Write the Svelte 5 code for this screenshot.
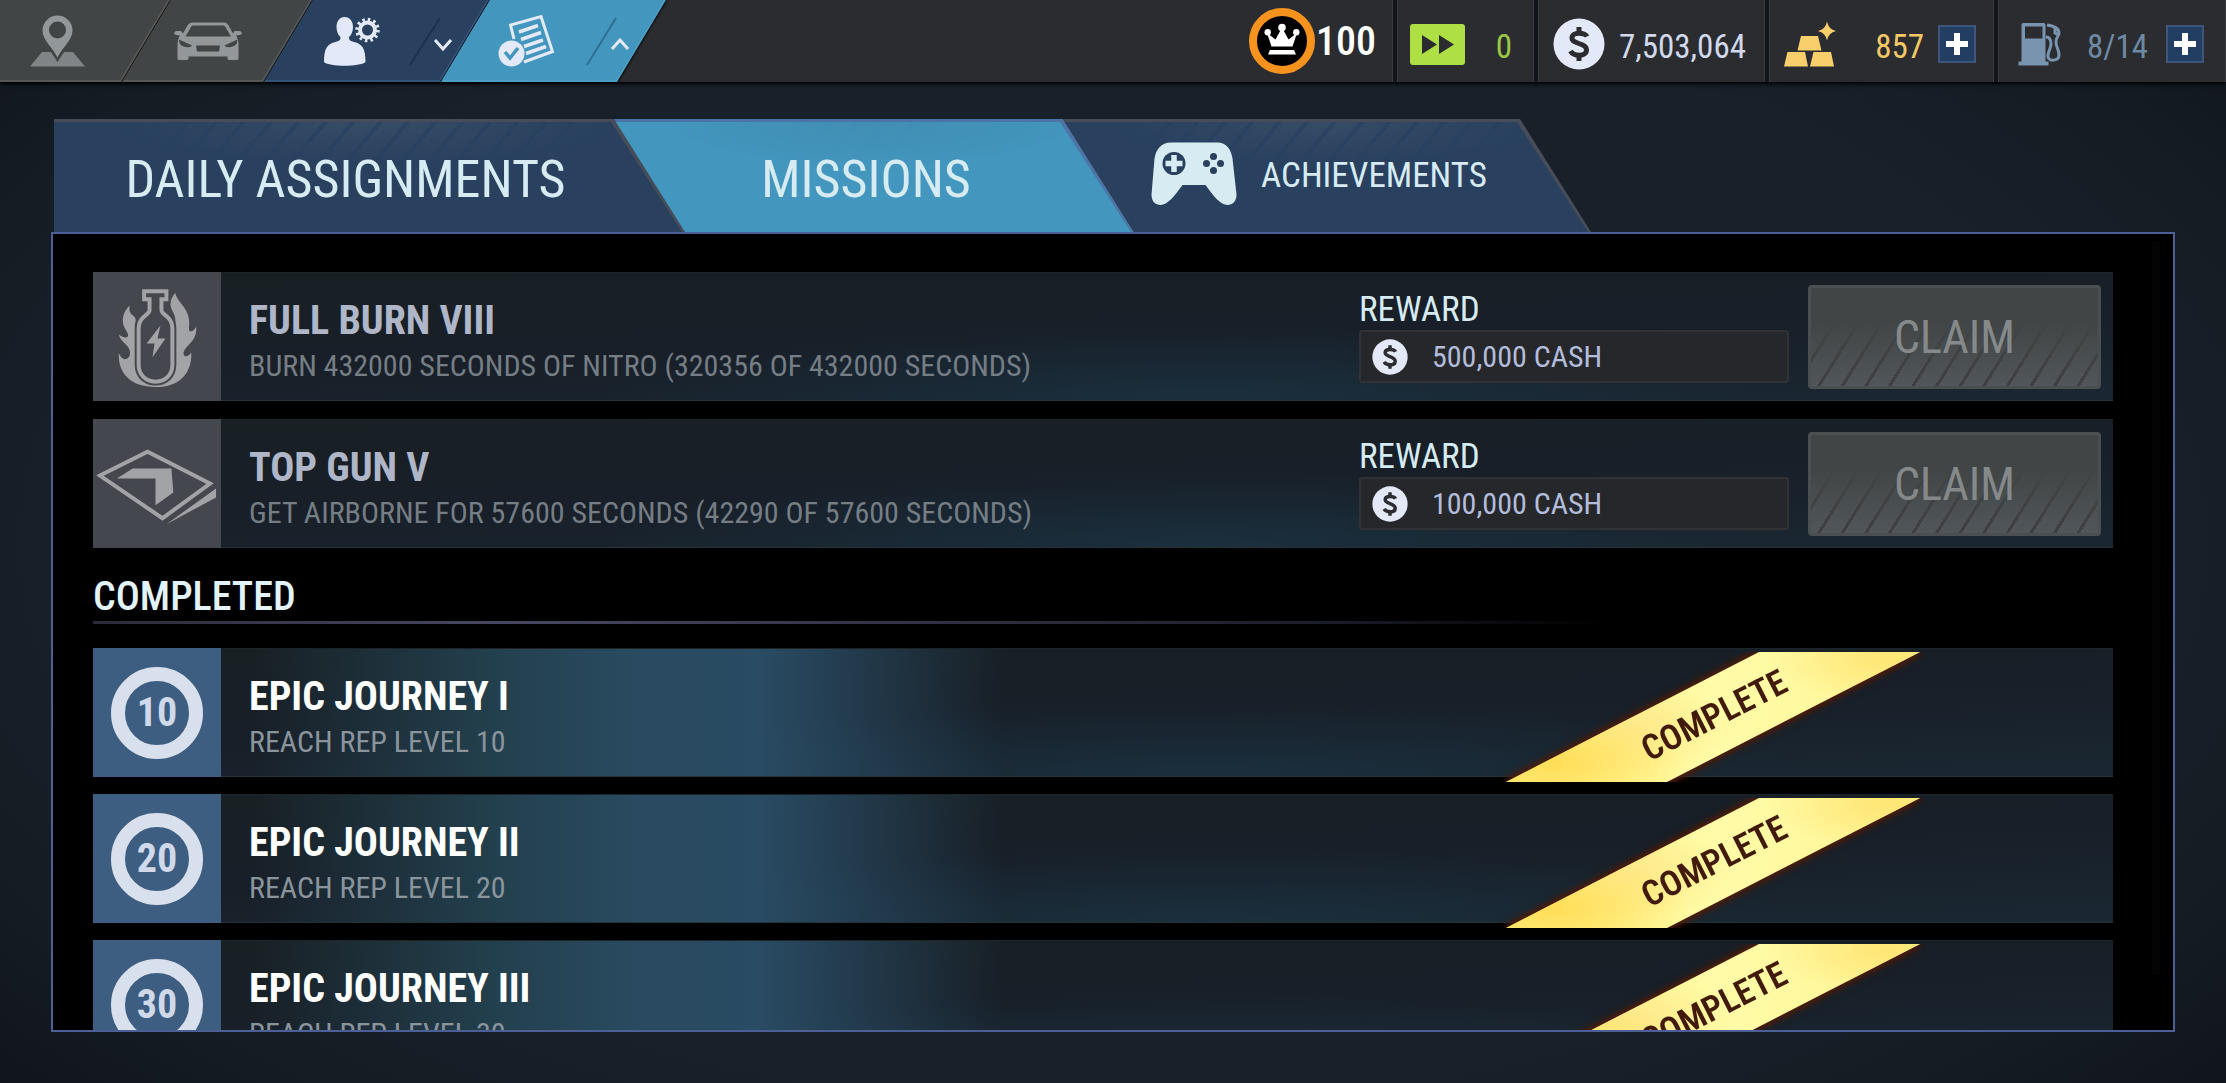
<script lang="ts">
	type Mission = { title: string; text: string; reward: string; icon: 'nitro' | 'air' };
	type Done = { level: number; title: string };

	const missions: Mission[] = [
		{
			title: 'FULL BURN VIII',
			text: 'BURN 432000 SECONDS OF NITRO (320356 OF 432000 SECONDS)',
			reward: '500,000 CASH',
			icon: 'nitro'
		},
		{
			title: 'TOP GUN V',
			text: 'GET AIRBORNE FOR 57600 SECONDS (42290 OF 57600 SECONDS)',
			reward: '100,000 CASH',
			icon: 'air'
		}
	];

	const completed: Done[] = [
		{ level: 10, title: 'EPIC JOURNEY I' },
		{ level: 20, title: 'EPIC JOURNEY II' },
		{ level: 30, title: 'EPIC JOURNEY III' }
	];

	let activeTab = $state('missions');
</script>

{#snippet coin(size: number)}
	<svg width={size} height={size} viewBox="0 0 52 52" aria-hidden="true">
		<circle cx="26" cy="26" r="25.5" fill="#e3e9f8" />
		<path d="M34 18.500C32 14.500 19 13 19 20c0 6.500 14.500 4.500 14.500 12 0 7-13 6.500-16 1" fill="none" stroke="#2b2c30" stroke-width="5" />
		<path d="M26 9v6M26 37v6" stroke="#2b2c30" stroke-width="5" />
	</svg>
{/snippet}

{#snippet plus()}
	<svg width="22" height="22" viewBox="0 0 22 22" aria-hidden="true">
		<path d="M11 0v22M0 11h22" stroke="#fff" stroke-width="6" />
	</svg>
{/snippet}

<div class="screen">
	<header class="topbar">
		<nav class="nav">
			<button class="nav-item first" aria-label="Map">
				<svg width="56" height="52" viewBox="30 15 56 52" aria-hidden="true">
					<path d="M42 52h31l12 14.500H30z" fill="#808486" />
					<path d="M57.500 62L47 46h21z" fill="#414545" />
					<path fill="#929799" fill-rule="evenodd" d="M57.500 57.500C53 48 42.500 40 42.500 30.500a15 15 0 0 1 30 0C72.500 40 62 48 57.500 57.500zM57.500 21.500a8.500 8.500 0 1 0 0 17 8.500 8.500 0 0 0 0-17z" />
				</svg>
			</button>
			<button class="nav-item" aria-label="Garage">
				<svg width="70" height="38" viewBox="173 23 69 38" aria-hidden="true">
					<path fill="#929799" fill-rule="evenodd" d="M192 23.500h31.500c2 0 3.500 1 4.500 3l4.500 8 1.500-2.500h5c3 0 3 4 0 4l-3.500.5c2 3 2.500 6 2.500 9v14c0 1-1 1.500-2 1.500h-7c-1 0-2-.5-2-1.500v-2h-39v2c0 1-1 1.500-2 1.500h-7c-1 0-2-.5-2-1.500v-14c0-3 .5-6 2.500-9L176 36c-3 0-3-4 0-4h4.500l2 2.500 4.500-8c1-2 3-3 5-3zM193 26.500c-1 0-2 .5-2.500 1.500L185 37.500h45.500L225 28c-.5-1-1.500-1.500-2.500-1.500z" />
					<path d="M178.500 40.500l13 6c-1 1.500-3 2-6 1.500-4-.5-7-2.500-7-7.500zM237 40.500l-13 6c1 1.500 3 2 6 1.500 4-.5 7-2.500 7-7.500zM195.500 46.500h24l-1 6h-22z" fill="#414545" />
				</svg>
			</button>
			<button class="nav-item blue" aria-label="Profile">
				<svg width="58" height="52" viewBox="323 14 58 52" aria-hidden="true">
					<path fill="#e3e9f8" d="M344.500 16c5.500 0 8.500 4.500 8.500 10 0 4-1.500 8-4 10 0 3 1 4 5 5 8 2 11.500 6 11.500 20-6 5-36 5-41.500 0 0-14 3.500-18 11.500-20 4-1 5-2 5-5-2.500-2-4-6-4-10 0-5.500 3-10 8-10z" />
					<circle cx="367.500" cy="29" r="7.500" fill="none" stroke="#e3e9f8" stroke-width="4" />
					<circle cx="367.500" cy="29" r="10.500" fill="none" stroke="#e3e9f8" stroke-width="3.500" stroke-dasharray="2.500 2.998" />
				</svg>
				<svg width="46" height="50" viewBox="409 14 46 50" aria-hidden="true">
					<path d="M440 16L410 63" stroke="#1c304f" stroke-width="2" />
					<path d="M435 38l8 9 8-9" fill="none" stroke="#e3e9f8" stroke-width="3" />
				</svg>
			</button>
			<button class="nav-item active" aria-label="Assignments">
				<svg width="58" height="54" viewBox="498 13 58 54" aria-hidden="true">
					<g fill="none" stroke="#e3e9f8">
						<path d="M514 38l-3.500-14L541 15.500l11.500 35L524 61" stroke-width="3" />
						<path d="M519 31l19-6.500M521 38.500l20-7M524 45.500l19-6.500M526 52.500l20-7" stroke-width="3.500" />
					</g>
					<circle cx="511.500" cy="52.500" r="13" fill="#e3e9f8" />
					<path d="M505 51l5 6 8-10" fill="none" stroke="#4396bd" stroke-width="3.500" />
				</svg>
				<svg width="46" height="50" viewBox="587 14 46 50" aria-hidden="true">
					<path d="M617 16L588 63" stroke="#2f6f92" stroke-width="2" />
					<path d="M613 47l8-9 8 9" fill="none" stroke="#e3e9f8" stroke-width="3" />
				</svg>
			</button>
		</nav>

		<div class="stats">
			<div class="stat level">
				<svg width="68" height="68" viewBox="1249 7 68 68" aria-hidden="true">
					<circle cx="1283" cy="41" r="29" fill="#000" stroke="#f6921e" stroke-width="8" />
					<g fill="#fff">
						<circle cx="1268.700" cy="32.300" r="3.200" />
						<circle cx="1283" cy="27.500" r="3.800" />
						<circle cx="1297.300" cy="32.300" r="3.200" />
						<path d="M1268 33l4.500 13.500h21l4.500-13.500-8.500 6.500-6.500-12-6.500 12zM1271 50h24l2 4.500h-28z" />
					</g>
				</svg>
				<span>100</span>
			</div>
			<div class="stat skip">
				<svg width="55" height="41" viewBox="0 0 55 41" aria-hidden="true">
					<rect width="55" height="41" rx="3" fill="#aee045" />
					<path d="M12 11l15 9.500L12 30zM29 11l15 9.500L29 30z" fill="#2b2c30" />
				</svg>
				<span>0</span>
			</div>
			<div class="stat cash">
				{@render coin(52)}
				<span>7,503,064</span>
			</div>
			<div class="stat gold">
				<svg width="52" height="46" viewBox="1785 18 52 46" aria-hidden="true">
					<path fill="#f8cf6b" d="M1788.500 49h17.500l3 14.500h-24zM1814.500 49h17.500l3 14.500h-24zM1802 33h17l3.500 14.500h-24zM1828 18.500q1.500 8 9 9.500-7.500 1.500-9 9.500-1.500-8-9-9.500 7.500-1.500 9-9.500z" />
				</svg>
				<span>857</span>
				<button class="add" aria-label="Add gold">{@render plus()}</button>
			</div>
			<div class="stat fuel">
				<svg width="44" height="44" viewBox="2018 21 44 44" aria-hidden="true">
					<path fill="#7894af" fill-rule="evenodd" d="M2021.500 24c0-1 .5-2 2-2h20c1.500 0 2 1 2 2v36.500h3v4h-30v-4h3zM2025 25.500v12h17.500v-12z" />
					<path d="M2046 36c4 0 5 3 5 7 0 5-4 9-3 13 1 5 11 4 11-2 0-6-3-7-3-13 0-5 3-6 3-9 0-4-5-7-12-8M2055 27v5l4 2" fill="none" stroke="#7894af" stroke-width="3" />
				</svg>
				<span>8/14</span>
				<button class="add" aria-label="Add fuel">{@render plus()}</button>
			</div>
		</div>
	</header>

	<main>
		<div class="tabs" role="tablist">
			<button class="tab daily" class:active={activeTab === 'daily'} role="tab" aria-selected={activeTab === 'daily'} onclick={() => (activeTab = 'daily')}>
				<span>DAILY ASSIGNMENTS</span>
			</button>
			<button class="tab missions" class:active={activeTab === 'missions'} role="tab" aria-selected={activeTab === 'missions'} onclick={() => (activeTab = 'missions')}>
				<span>MISSIONS</span>
			</button>
			<button class="tab achievements" class:active={activeTab === 'achievements'} role="tab" aria-selected={activeTab === 'achievements'} onclick={() => (activeTab = 'achievements')}>
				<svg width="86" height="64" viewBox="1150 140 86 64" aria-hidden="true">
					<path fill="#d7ebf3" d="M1170 140.500h46c10 0 14 7 15.500 16l4 36c0 7-4 10.500-9 10.500-7 0-14-9-22-20h-23c-8 11-15 20-22 20-5 0-9-3.500-9-10.500l3-36c1.500-9 6.500-16 16.500-16z" />
					<circle cx="1173" cy="161.500" r="11.500" fill="#29415f" />
					<path d="M1173 153v17M1164.500 161.500h17" stroke="#d7ebf3" stroke-width="5.500" />
					<g fill="#29415f">
						<circle cx="1212.500" cy="154.500" r="3.500" />
						<circle cx="1205.500" cy="161.500" r="3.500" />
						<circle cx="1219.500" cy="161.500" r="3.500" />
						<circle cx="1212.500" cy="168.500" r="3.500" />
					</g>
				</svg>
				<span>ACHIEVEMENTS</span>
			</button>
		</div>

		<section class="panel">
			<ul class="rows open">
				{#each missions as m}
					<li class="row">
						<div class="tile">
							{#if m.icon === 'nitro'}
								<svg viewBox="0 0 129 129" aria-hidden="true">
									<path fill="#a2a3a6" d="M37 33c-2 10 6 9 6 14v43c2 15 11 21 20 21s19-6 20-21V47c0-6-5-10-5-16 0-4 2-7 5-11 1 9 14 15 14 30 0 5-1 8 1 9 3 0 5-3 6-5 1 10-4 15-9 20-4 4-5 8-2 10 2 0 4-1 6-4 1 20-11 35-36 35S25 101 26 81c2 4 4 6 6 6 7-1 7-10 1-15-4-4-6-6-7-10 4 3 8 4 9 2 2-4-5-8-5-16 0-6 3-12 7-15z" />
									<path d="M51.500 18.500h22.500v8h-5v11c0 5 11 6 11 18v37c0 10-7 17-17 17s-17-7-17-17v-37c0-12 11-13 11-18v-11h-5.500z" fill="#45474e" stroke="#45474e" stroke-width="8" />
									<path d="M51.500 18.500h22.500v8h-5v11c0 5 11 6 11 18v37c0 10-7 17-17 17s-17-7-17-17v-37c0-12 11-13 11-18v-11h-5.500z" fill="none" stroke="#a2a3a6" stroke-width="4" />
									<path d="M68 53L54 71h8l-2 14 13-19h-8z" fill="#a2a3a6" />
								</svg>
							{:else}
								<svg viewBox="0 0 129 129" aria-hidden="true">
									<path d="M7 56l48-24 63 32-48 35z" fill="none" stroke="#a2a3a6" stroke-width="4" />
									<path d="M24 59l16-10h39l2 24-18 13V59zM124 69v9l-50 27z" fill="#a2a3a6" />
								</svg>
							{/if}
						</div>
						<div class="info">
							<h3>{m.title}</h3>
							<p>{m.text}</p>
						</div>
						<div class="reward">
							<div class="reward-label">REWARD</div>
							<div class="reward-box">
								{@render coin(36)}
								<span>{m.reward}</span>
							</div>
						</div>
						<button class="claim" disabled>CLAIM</button>
					</li>
				{/each}
			</ul>

			<h2>COMPLETED</h2>

			<ul class="rows done">
				{#each completed as d}
					<li class="row">
						<div class="tile">
							<div class="ring">{d.level}</div>
						</div>
						<div class="info">
							<h3>{d.title}</h3>
							<p>REACH REP LEVEL {d.level}</p>
						</div>
						<div class="ribbon">
							<div class="ribbon-fill"></div>
							<span>COMPLETE</span>
						</div>
					</li>
				{/each}
			</ul>
			<div class="scroll-thumb"></div>
		</section>
	</main>
</div>

<style>
	:global(body) {
		background: #0c1117;
	}

	.screen {
		display: flex;
		flex-direction: column;
		height: 100vh;
		overflow: hidden;
		box-sizing: border-box;
		background: radial-gradient(ellipse 75% 85% at 50% 50%, #18202a 60%, #151c23 75%, #0c1016 100%);
		font-family: 'Roboto Condensed', 'Liberation Sans Narrow', Roboto, sans-serif;
		color: #d7ebf3;
	}

	button {
		font: inherit;
		color: inherit;
		border: 0;
		padding: 0;
		margin: 0;
		background: none;
	}

	svg {
		display: block;
		flex: none;
	}

	h2, h3, p, ul {
		margin: 0;
		padding: 0;
		font-weight: 400;
	}

	ul {
		list-style: none;
	}

	.topbar {
		display: flex;
		justify-content: space-between;
		height: 82px;
		flex: none;
		background: #2b2c30;
		box-shadow: 0 2px 4px #000;
	}

	.nav {
		display: flex;
		filter: drop-shadow(1px 0 1px #000);
	}

	.nav-item {
		--edge: #565856;
		--fill: #414545;
		position: relative;
		z-index: 0;
		display: flex;
		align-items: center;
		justify-content: space-between;
		width: 190px;
		margin-left: -48px;
		padding: 0 50px 0 51px;
		box-sizing: border-box;
		background: var(--edge);
		clip-path: polygon(49px 0, 100% 0, calc(100% - 49px) 100%, 0 100%);
	}

	.nav-item::before {
		content: '';
		position: absolute;
		z-index: -1;
		inset: 0 2px 2px 0;
		background: var(--fill);
		clip-path: polygon(49px 0, 100% 0, calc(100% - 48px) 100%, 0 100%);
	}

	.nav-item.first {
		width: 170px;
		margin-left: 0;
		padding-left: 30px;
		clip-path: polygon(0 0, 100% 0, calc(100% - 49px) 100%, 0 100%);
	}

	.nav-item.first::before {
		clip-path: polygon(0 0, 100% 0, calc(100% - 48px) 100%, 0 100%);
	}

	.nav-item.blue,
	.nav-item.active {
		width: 225px;
		padding: 0 34px 0 59px;
	}

	.nav-item.blue {
		--edge: #34527a;
		--fill: #29415f;
	}

	.nav-item.active {
		--edge: #4b9fc6;
		--fill: #4396bd;
		padding-left: 57px;
	}

	.stats {
		display: flex;
		gap: 4px;
		background: #10161c;
		font-size: 33px;
	}

	.stat {
		display: flex;
		align-items: center;
		box-sizing: border-box;
		padding-top: 6px;
		background: #2b2c30;
		border: solid #3b3c40;
		border-width: 0 1px;
	}

	.stat span {
		flex: 1;
		padding-top: 4px;
		text-align: right;
	}

	.stat.level {
		padding: 0 16px 0 0;
		border-left: 0;
		font-size: 40px;
		font-weight: 500;
		color: #fff;
	}

	.stat.level span {
		padding-top: 0;
	}

	.stat.skip {
		width: 137px;
		padding-left: 12px;
		padding-right: 21px;
		color: #9cc744;
	}

	.stat.cash {
		width: 227px;
		padding-left: 14px;
		padding-right: 18px;
		color: #d2d9ec;
	}

	.stat.gold {
		width: 225px;
		padding-left: 14px;
		padding-right: 17px;
		color: #f3c965;
	}

	.stat.fuel {
		width: 228px;
		padding-left: 19px;
		padding-right: 21px;
		color: #6e89a3;
	}

	.add {
		display: grid;
		place-items: center;
		width: 38px;
		height: 38px;
		margin-left: 14px;
		box-sizing: border-box;
		background: #233e63;
		border: 2px solid #3f557c;
	}

	.fuel .add {
		margin-left: 18px;
	}

	main {
		flex: 1;
		min-height: 0;
		display: flex;
		flex-direction: column;
		padding: 37px 51px 51px;
	}

	.tabs {
		display: flex;
		height: 113px;
		flex: none;
		padding-left: 3px;
	}

	.tab {
		--edge: #474d58;
		--fill: #29415f;
		position: relative;
		z-index: 0;
		display: flex;
		align-items: center;
		justify-content: center;
		margin-left: -71px;
		padding: 7px 71px 0;
		box-sizing: border-box;
		background: var(--edge);
		clip-path: polygon(0 0, calc(100% - 71px) 0, 100% 100%, 71px 100%);
		font-size: 52px;
	}

	.tab::before,
	.tab::after {
		content: '';
		position: absolute;
		z-index: -1;
		inset: 3px 3px 0 0;
		background: var(--fill);
		clip-path: polygon(0 0, calc(100% - 71px) 0, 100% 100%, 0 100%);
	}

	.tab::after {
		background: repeating-linear-gradient(130deg, #3c5069 0 17px, #2d4565 17px 21px);
		-webkit-mask-image: radial-gradient(ellipse 40% 40% at 50% 0, rgba(0, 0, 0, 0.7), transparent);
		mask-image: radial-gradient(ellipse 40% 40% at 50% 0, rgba(0, 0, 0, 0.7), transparent);
	}

	.tab.daily {
		width: 631px;
		margin-left: 0;
		padding-left: 54px;
		padding-right: 102px;
		clip-path: polygon(0 0, calc(100% - 71px) 0, 100% 100%, 0 100%);
	}

	.tab.missions {
		width: 520px;
		padding-right: 87px;
	}

	.tab.achievements {
		width: 528px;
		gap: 24px;
		padding: 0 74px 0 58px;
		font-size: 35px;
	}

	.tab.achievements svg {
		margin-bottom: 4px;
	}

	.tab.active {
		--edge: #4d74a6;
		--fill: #4396bd;
	}

	.tab.active::after {
		opacity: 0.15;
	}

	.panel {
		position: relative;
		flex: 1;
		min-height: 0;
		overflow: hidden;
		box-sizing: border-box;
		padding: 38px 60px 0 40px;
		background: #000;
		border: 2px solid #4c5f97;
	}

	.rows {
		display: flex;
		flex-direction: column;
		gap: 18px;
	}

	.rows.done {
		gap: 17px;
	}

	.row {
		position: relative;
		display: flex;
		align-items: center;
		height: 129px;
		padding-right: 12px;
		box-sizing: border-box;
		background:
			radial-gradient(ellipse 30% 60% at 55% 100%, rgba(27, 58, 77, 0.5), transparent),
			linear-gradient(178deg, #182024 0%, #181f28 50%, #1a2732 100%);
		box-shadow: inset 0 -1px #24333a, inset 0 1px #1b2428;
	}

	.done .row {
		background:
			linear-gradient(90deg, transparent 8%, #23404e 20%, #294a60 27%, #294b63 33%, rgba(41, 75, 99, 0.6) 38%, transparent 45%),
			radial-gradient(ellipse 30% 60% at 55% 100%, rgba(27, 58, 77, 0.5), transparent),
			linear-gradient(178deg, #182024 0%, #181f28 50%, #1a2732 100%);
	}

	.tile {
		display: grid;
		place-items: center;
		width: 128px;
		height: 129px;
		background: #45474e;
	}

	.tile svg {
		width: 128px;
		height: 128px;
	}

	.done .tile {
		background: #3d5e80;
	}

	.ring {
		display: grid;
		place-items: center;
		width: 92px;
		height: 92px;
		box-sizing: border-box;
		border: 14px solid #d8dfed;
		border-radius: 50%;
		font-size: 40px;
		font-weight: 700;
		line-height: 64px;
		color: #d0d9ea;
	}

	.info {
		flex: 1;
		padding: 12px 0 0 28px;
		white-space: nowrap;
	}

	.info h3 {
		font-size: 40px;
		line-height: 46px;
		font-weight: 700;
		color: #afb6c8;
	}

	.info p {
		font-size: 30px;
		line-height: 44px;
		color: #757d85;
	}

	.done .info h3 {
		color: #fff;
	}

	.done .info p {
		color: #8a949d;
	}

	.reward {
		width: 430px;
		margin-right: 19px;
	}

	.reward-label {
		font-size: 35px;
		line-height: 40px;
	}

	.reward-box {
		display: flex;
		align-items: center;
		gap: 24px;
		height: 53px;
		padding-left: 11px;
		box-sizing: border-box;
		background: #26272b;
		border: 2px solid #303236;
		border-radius: 3px;
		font-size: 30px;
		color: #b3bddb;
	}

	.claim {
		width: 293px;
		height: 104px;
		border: 3px solid #4a4f51;
		border-radius: 4px;
		background:
			linear-gradient(#414545 35%, rgba(65, 69, 69, 0) 100%),
			repeating-linear-gradient(122deg, #50565a 0 17px, #3c4042 17px 20px);
		font-size: 46px;
		color: #85898a;
	}

	h2 {
		margin: 25px 0 24px;
		padding-bottom: 3px;
		font-size: 40px;
		font-weight: 500;
		line-height: 48px;
		background: linear-gradient(90deg, #2a2b3a, #454862 20%, #1d1f2b 60%, transparent 75%) bottom / 100% 3px no-repeat;
		color: #e2f4fa;
	}

	/* lies across the row and hangs a little below it */
	.ribbon {
		position: absolute;
		top: 4px;
		right: 193px;
		width: 414px;
		height: 130px;
		display: grid;
		place-items: center;
		filter: drop-shadow(0 0 2px #4a1c0a) drop-shadow(0 0 3px #4a1c0a) drop-shadow(0 0 3px #4a1c0a);
		clip-path: inset(0 -20px);
	}

	.ribbon-fill {
		position: absolute;
		inset: 0;
		background:
			radial-gradient(ellipse 32% 40% at 12% 85%, #ffdd58, transparent),
			radial-gradient(ellipse 25% 35% at 30% 58%, #ffe88a, transparent),
			radial-gradient(ellipse 28% 35% at 92% 5%, #ffe574, transparent),
			linear-gradient(90deg, #fff07c, #fffba8 50%, #fff596);
		clip-path: polygon(253px 0, 100% 0, 161px 100%, 0 100%);
	}

	.ribbon span {
		position: relative;
		padding-left: 4px;
		font-size: 35px;
		font-weight: 600;
		line-height: 40px;
		color: #421a0a;
		transform: rotate(-27deg);
	}

	.scroll-thumb {
		position: absolute;
		top: 8px;
		right: 13px;
		bottom: 56px;
		width: 8px;
		background: #040405;
	}
</style>
